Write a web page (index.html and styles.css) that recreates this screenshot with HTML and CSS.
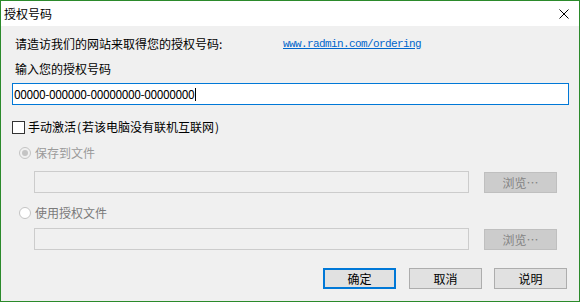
FILE: index.html
```html
<!DOCTYPE html>
<html lang="zh-CN">
<head>
  <meta charset="UTF-8" />
  <title>授权号码</title>
  <link rel="stylesheet" href="styles.css">
</head>
<body>
  <div class="window">
    <div class="titlebar">
      <span class="title">授权号码</span>
      <svg class="close" width="10" height="10" viewBox="0 0 10 10">
        <path d="M0.5 0.5 L9.5 9.5 M9.5 0.5 L0.5 9.5" stroke="#000" stroke-width="1" fill="none" />
      </svg>
    </div>

    <div class="content">
      <div class="line intro">
        <span class="intro-text">请造访我们的网站来取得您的授权号码:</span>
        <a class="link" href="#">www.radmin.com/ordering</a>
      </div>
      <div class="line prompt">输入您的授权号码</div>
      <div class="keyfield">
        <span class="keytext">00000-000000-00000000-00000000</span><span class="caret"></span>
      </div>

      <label class="line check-row">
        <span class="checkbox"></span>
        <span class="check-label">手动激活<span class="paren">(</span>若该电脑没有联机互联网<span class="paren">)</span></span>
      </label>

      <div class="line radio-row first">
        <span class="radio checked"></span>
        <span class="radio-label">保存到文件</span>
      </div>
      <div class="file-row">
        <div class="file-field"></div>
        <button class="browse" disabled>浏览…</button>
      </div>

      <div class="line radio-row second">
        <span class="radio"></span>
        <span class="radio-label">使用授权文件</span>
      </div>
      <div class="file-row tight">
        <div class="file-field"></div>
        <button class="browse" disabled>浏览…</button>
      </div>

      <div class="actions">
        <button class="btn default">确定</button>
        <button class="btn">取消</button>
        <button class="btn last">说明</button>
      </div>
    </div>
  </div>
</body>
</html>
```

FILE: styles.css
```css
* {
  box-sizing: border-box;
  margin: 0;
  padding: 0;
}

body {
  font-family: "Noto Sans CJK SC", "Noto Sans", sans-serif;
  font-size: 12px;
  color: #000;
  background: #f0f0f0;
}

.window {
  width: 580px;
  height: 302px;
  border: 1px solid #2b8a2b;
  background: #f0f0f0;
  display: flex;
  flex-direction: column;
}

.titlebar {
  height: 25px;
  background: #fff;
  display: flex;
  align-items: center;
  justify-content: space-between;
  padding: 0 10px 0 3px;
}

.title {
  line-height: 16px;
}

.close {
  display: block;
}

.content {
  padding: 0 10px 0 11px;
  display: flex;
  flex-direction: column;
}

.line {
  height: 16px;
  line-height: 16px;
  display: flex;
  align-items: center;
}

.intro {
  margin-top: 10px;
  padding-left: 3px;
}

.intro-text {
  width: 268px;
}

.link {
  font-family: "Liberation Mono", monospace;
  font-size: 11px;
  letter-spacing: -0.6px;
  color: #0066cc;
  text-decoration: underline;
}

.prompt {
  margin-top: 9px;
  padding-left: 3px;
}

.keyfield {
  margin-top: 6px;
  height: 22px;
  border: 1px solid #0078d7;
  background: #fff;
  display: flex;
  align-items: center;
  padding-left: 1px;
}

.keytext {
  line-height: 16px;
  letter-spacing: -0.4px;
}

.caret {
  width: 1px;
  height: 13px;
  margin-left: 1px;
  background: #000;
}

.check-row {
  margin-top: 14px;
}

.checkbox {
  width: 13px;
  height: 13px;
  border: 1px solid #333;
  background: #fff;
  margin-right: 3px;
}

.paren {
  padding: 0 1px;
}

.radio-row {
  padding-left: 7px;
  color: #9a9a9a;
}

.radio-row.first {
  margin-top: 10px;
}

.radio-row.second {
  margin-top: 12px;
  color: #7a7a7a;
}

.radio {
  width: 12px;
  height: 12px;
  border-radius: 50%;
  border: 1px solid #c4c4c4;
  background: #fff;
  margin-right: 4px;
  display: flex;
  align-items: center;
  justify-content: center;
}

.radio.checked {
  background: #f0f0f0;
}

.radio.checked::after {
  content: "";
  width: 6px;
  height: 6px;
  border-radius: 50%;
  background: #c4c4c4;
}

.file-row {
  margin-top: 10px;
  padding-left: 22px;
  display: flex;
  align-items: center;
  gap: 15px;
}

.file-row.tight {
  margin-top: 7px;
}

.file-field {
  width: 435px;
  height: 22px;
  border: 1px solid #cccccc;
  background: #f0f0f0;
}

.browse {
  width: 73px;
  height: 21px;
  border: 1px solid #bfbfbf;
  background: #cccccc;
  color: #838383;
  font-family: inherit;
  font-size: 12px;
}

.actions {
  margin-top: 18px;
  padding-right: 2px;
  display: flex;
  justify-content: flex-end;
  gap: 13px;
}

.btn {
  width: 73px;
  height: 21px;
  border: 1px solid #adadad;
  background: #e1e1e1;
  color: #000;
  font-family: inherit;
  font-size: 12px;
}

.btn.default {
  border: 2px solid #0078d7;
}

.btn.last {
  margin-left: -1px;
}
```
